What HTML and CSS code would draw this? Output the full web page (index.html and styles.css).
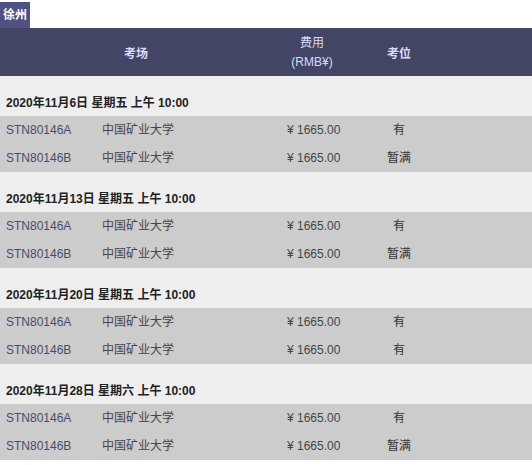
FILE: index.html
```html
<!DOCTYPE html>
<html lang="zh-CN">
<head>
<meta charset="utf-8">
<title>徐州</title>
<link rel="stylesheet" href="styles.css">
</head>
<body>
<div class="tab">徐州</div>
<table class="schedule">
  <colgroup>
    <col class="c-code"><col class="c-name"><col class="c-fee"><col class="c-seat"><col class="c-rest">
  </colgroup>
  <thead>
    <tr>
      <th colspan="2" class="th-bold">考场</th>
      <th class="th-fee">费用<br>(RMB¥)</th>
      <th class="th-bold">考位</th>
      <th></th>
    </tr>
  </thead>
  <tbody>
    <tr class="date"><td colspan="5">2020年11月6日 星期五 上午 10:00</td></tr>
    <tr class="row"><td class="code">STN80146A</td><td>中国矿业大学</td><td class="fee">¥ 1665.00</td><td class="seat">有</td><td></td></tr>
    <tr class="row"><td class="code">STN80146B</td><td>中国矿业大学</td><td class="fee">¥ 1665.00</td><td class="seat">暂满</td><td></td></tr>

    <tr class="date"><td colspan="5">2020年11月13日 星期五 上午 10:00</td></tr>
    <tr class="row"><td class="code">STN80146A</td><td>中国矿业大学</td><td class="fee">¥ 1665.00</td><td class="seat">有</td><td></td></tr>
    <tr class="row"><td class="code">STN80146B</td><td>中国矿业大学</td><td class="fee">¥ 1665.00</td><td class="seat">暂满</td><td></td></tr>

    <tr class="date"><td colspan="5">2020年11月20日 星期五 上午 10:00</td></tr>
    <tr class="row"><td class="code">STN80146A</td><td>中国矿业大学</td><td class="fee">¥ 1665.00</td><td class="seat">有</td><td></td></tr>
    <tr class="row"><td class="code">STN80146B</td><td>中国矿业大学</td><td class="fee">¥ 1665.00</td><td class="seat">有</td><td></td></tr>

    <tr class="date"><td colspan="5">2020年11月28日 星期六 上午 10:00</td></tr>
    <tr class="row"><td class="code">STN80146A</td><td>中国矿业大学</td><td class="fee">¥ 1665.00</td><td class="seat">有</td><td></td></tr>
    <tr class="row"><td class="code">STN80146B</td><td>中国矿业大学</td><td class="fee">¥ 1665.00</td><td class="seat">暂满</td><td></td></tr>
  </tbody>
</table>
</body>
</html>
```
FILE: styles.css
```css
html, body {
  margin: 0;
  padding: 0;
  background: #ffffff;
}
body {
  font-family: "Liberation Sans", "Noto Sans CJK SC", sans-serif;
  font-size: 12px;
  color: #333333;
}
.tab {
  display: inline-block;
  margin-top: 2px;
  width: 30px;
  height: 26px;
  line-height: 26px;
  text-align: center;
  background: #4e5282;
  color: #ffffff;
  font-weight: bold;
  font-size: 12px;
  vertical-align: top;
}
.schedule {
  width: 532px;
  border-collapse: collapse;
  border-spacing: 0;
  table-layout: fixed;
}
.c-code { width: 96px; }
.c-name { width: 176px; }
.c-fee { width: 80px; }
.c-seat { width: 94px; }
.c-rest { width: 86px; }

thead tr {
  background: #424563;
}
th {
  color: #d8dcff;
  font-size: 12px;
  text-align: center;
  padding: 0;
  vertical-align: middle;
  height: 48px;
}
.th-bold { font-weight: bold; }
.th-fee { font-weight: normal; line-height: 19px; padding-top: 2px; height: 46px; }

td { padding: 0; }
.date {
  background: #eeeeee;
}
.date td {
  font-weight: bold;
  color: #222222;
  padding: 13px 0 0 6px;
  line-height: 18px;
  vertical-align: middle;
  height: 27px;
}
.row {
  background: #cccccc;
}
.row td {
  height: 28px;
  line-height: 28px;
  vertical-align: middle;
  white-space: nowrap;
}
.row td.code {
  padding-left: 6px;
  color: #4a4a6e;
}
.row td:nth-child(2) {
  padding-left: 6px;
  color: #444444;
}
.fee {
  padding-left: 15px;
  color: #444444;
}
.seat {
  text-align: center;
  color: #333333;
}
```
